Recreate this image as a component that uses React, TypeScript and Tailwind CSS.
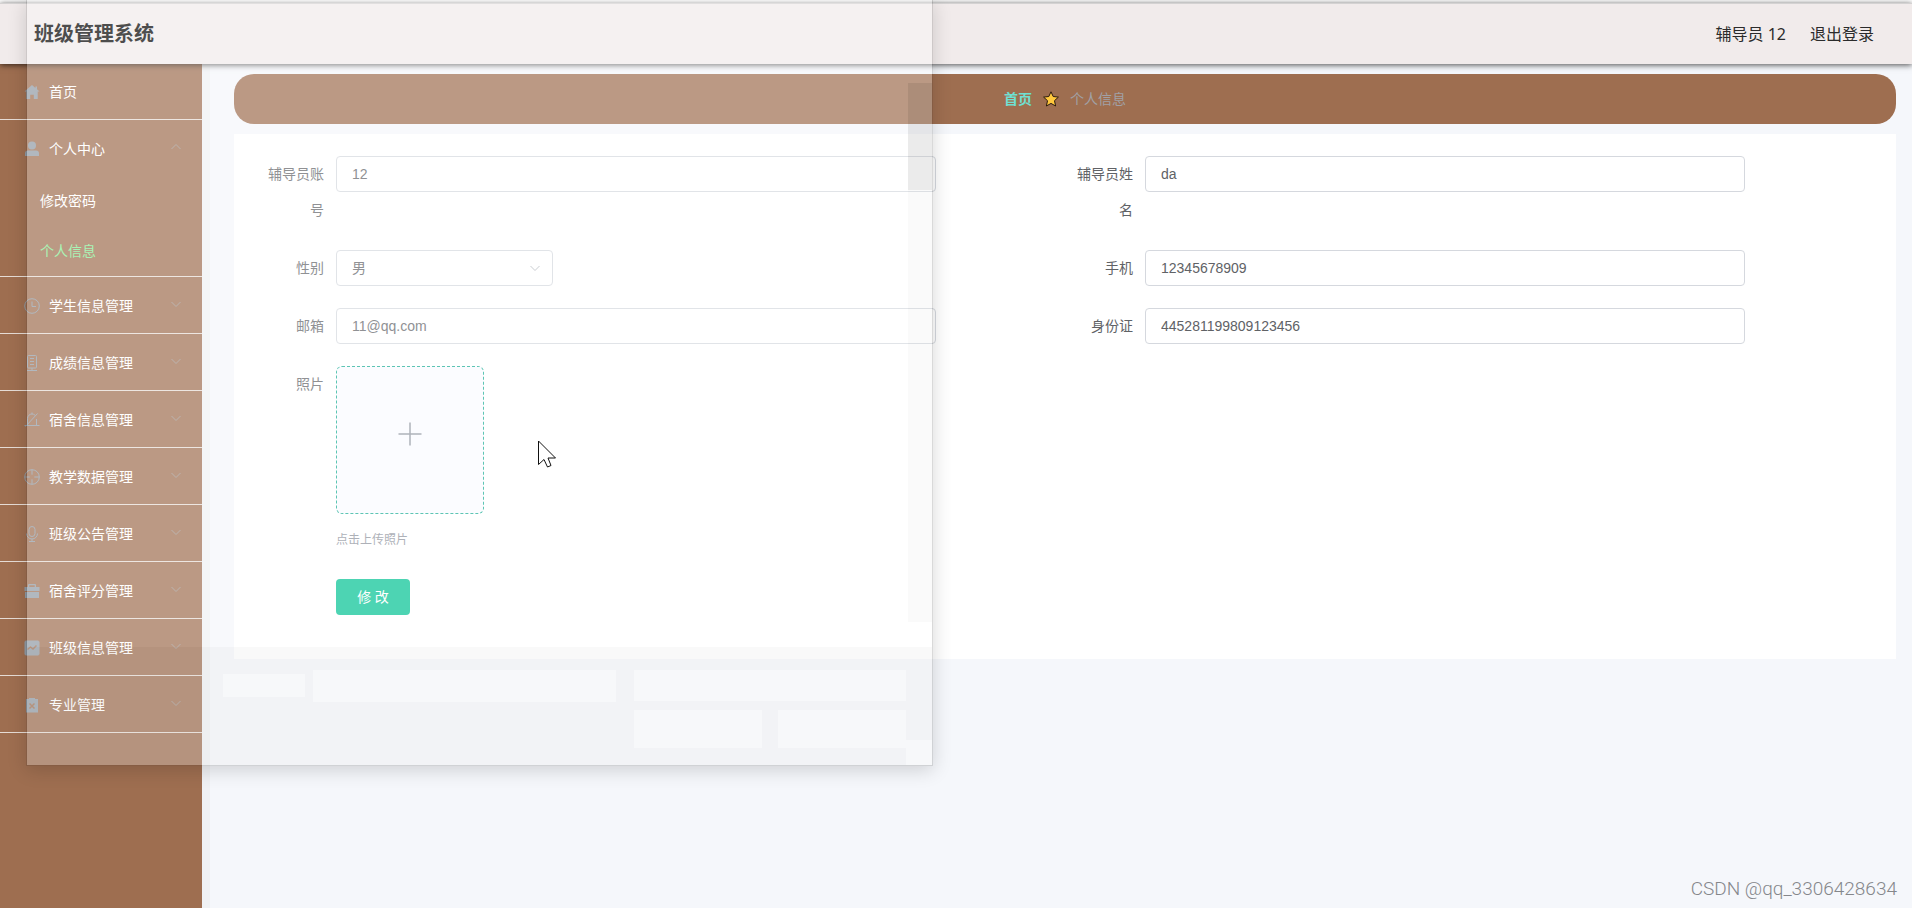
import { useState, ChangeEvent, FormEvent, ReactNode } from "react";

const menus = [
  { title: "学生信息管理", icon: "time" },
  { title: "成绩信息管理", icon: "phone" },
  { title: "宿舍信息管理", icon: "bellOff" },
  { title: "教学数据管理", icon: "aim" },
  { title: "班级公告管理", icon: "mic" },
  { title: "宿舍评分管理", icon: "case" },
  { title: "班级信息管理", icon: "chart" },
  { title: "专业管理", icon: "release" },
];

const icons: Record<string, ReactNode> = {
  home: (
    <path
      fill="currentColor"
      d="M9 2 1.5 8.600h1.800V16h3.900v-4.300h3.600V16h3.900V8.600h1.800L14 6.300V3.600h-1.600v1.300z"
    />
  ),
  user: (
    <g fill="currentColor">
      <circle cx="9" cy="5.500" r="4" />
      <path d="M2 16v-2.500A3 3 0 0 1 5 10.500h8a3 3 0 0 1 3 3V16z" />
    </g>
  ),
  time: (
    <g>
      <circle cx="9" cy="9" r="7.300" />
      <path d="M9 4.500V9.500h4" />
    </g>
  ),
  phone: (
    <g>
      <rect x="4.500" y="1.500" width="9" height="12.500" rx="1" />
      <path d="M7 4.500h4M7 7.500h4M7 10.500h4M9 14v2.500M4 16.500h10" />
    </g>
  ),
  bellOff: (
    <path d="M4.500 14V7.500A4.500 4.500 0 0 1 9 3a4.500 4.500 0 0 1 3 1.200M13.500 8v6M1.500 14.500h15M2.500 15.500 14.500 2.500M9 1.500V3" />
  ),
  aim: (
    <g>
      <circle cx="9" cy="9" r="7.300" />
      <path d="M9 1.700v5M9 11.300v5M1.700 9h5M11.300 9h5" />
    </g>
  ),
  mic: (
    <g>
      <rect x="6" y="1.500" width="6" height="10" rx="3" />
      <path d="M3.500 8.500a5.500 5.500 0 0 0 11 0M9 14v2.500M6 16.500h6" />
    </g>
  ),
  case: (
    <g fill="currentColor" stroke="none">
      <path d="M6 2h6a1 1 0 0 1 1 1v2h3.500v4h-15V5H5V3a1 1 0 0 1 1-1zm.3 1.300V5h5.400V3.300z" />
      <path d="M2 10h14v6H2z" />
    </g>
  ),
  chart: (
    <g>
      <rect x="2" y="2" width="14" height="14" rx="1" fill="currentColor" />
      <path
        d="m4.500 10.500 3-2.500 2.500 2 3.500-3.500"
        stroke="#9e6e50"
        strokeWidth="1.500"
      />
    </g>
  ),
  release: (
    <g>
      <path
        fill="currentColor"
        stroke="none"
        d="M3 3h3V2h6v1h3v13.500H3z"
      />
      <path
        d="m6.500 7.500 5 5M11.500 7.500l-5 5"
        stroke="#9e6e50"
        strokeWidth="1.500"
      />
    </g>
  ),
};

const MenuIcon = ({ name }: { name: string }) => (
  <span className="mr-[5px] flex w-6 justify-center text-[#909aa4]">
    <svg
      width="18"
      height="18"
      viewBox="0 0 18 18"
      fill="none"
      stroke="currentColor"
      strokeWidth={name === "home" || name === "user" ? 0 : 1}
    >
      {icons[name]}
    </svg>
  </span>
);

const Chevron = ({ up, className }: { up?: boolean; className?: string }) => (
  <svg
    width="12"
    height="12"
    viewBox="0 0 12 12"
    fill="none"
    stroke="currentColor"
    className={className}
  >
    <path d={up ? "m1.500 8 4.500-4.500L10.500 8" : "M1.500 4 6 8.500 10.500 4"} />
  </svg>
);

const MenuTitle = ({
  icon,
  title,
  open,
}: {
  icon: string;
  title: string;
  open?: boolean;
}) => (
  <button
    type="button"
    className="flex h-14 w-full items-center px-5 pt-0.5 text-left text-white"
  >
    <MenuIcon name={icon} />
    <span className="flex-1">{title}</span>
    <Chevron up={open} className="mb-1 text-[#a0938b]" />
  </button>
);

const Sidebar = () => (
  <nav className="w-[202px] shrink-0 bg-[#9e6e50] text-sm text-white">
    <a
      href="#home"
      className="flex h-14 items-center border-b border-[#e6dcd5] px-5"
    >
      <MenuIcon name="home" />
      首页
    </a>
    <div className="border-b border-[#e6dcd5]">
      <MenuTitle icon="user" title="个人中心" open />
      <a href="#password" className="flex h-[50px] items-center pl-10">
        修改密码
      </a>
      <a
        href="#profile"
        className="flex h-[50px] items-center pl-10 text-[#84ef96]"
      >
        个人信息
      </a>
    </div>
    {menus.map((m) => (
      <div key={m.title} className="border-b border-[#e6dcd5]">
        <MenuTitle icon={m.icon} title={m.title} />
      </div>
    ))}
  </nav>
);

const FormItem = ({
  id,
  label,
  children,
}: {
  id: string;
  label: string;
  children: ReactNode;
}) => (
  <div className="mb-[22px] flex items-start">
    <label
      htmlFor={id}
      className="w-20 shrink-0 pr-3 text-right leading-9 text-[#606266]"
    >
      {label}
    </label>
    <div className="min-w-0 flex-1">{children}</div>
  </div>
);

const inputClass =
  "block h-9 w-full max-w-[600px] rounded border border-[#d5d8de] bg-white px-[15px] font-['Liberation_Sans','Noto_Sans_CJK_SC',sans-serif] text-sm text-[#606266] outline-none";

const ProfileForm = () => {
  const [user, setUser] = useState({
    account: "12",
    name: "da",
    sex: "男",
    phone: "12345678909",
    email: "11@qq.com",
    idCard: "445281199809123456",
  });

  function handleChange(e: ChangeEvent<HTMLInputElement | HTMLSelectElement>) {
    const { name, value } = e.target;
    setUser({ ...user, [name]: value });
  }

  const updateUser = (e: FormEvent) => {
    e.preventDefault();
    console.log(user);
  };

  return (
    <form
      onSubmit={updateUser}
      className="mt-[10px] bg-white px-[22px] pt-[22px] pb-[22px] text-sm"
    >
      <div className="grid grid-cols-2">
        <FormItem id="account" label="辅导员账号">
          <input
            id="account"
            name="account"
            className={inputClass}
            value={user.account}
            onChange={handleChange}
          />
        </FormItem>
        <FormItem id="name" label="辅导员姓名">
          <input
            id="name"
            name="name"
            className={inputClass}
            value={user.name}
            onChange={handleChange}
          />
        </FormItem>
        <FormItem id="sex" label="性别">
          <div className="relative w-[217px]">
            <select
              id="sex"
              name="sex"
              className={`${inputClass} appearance-none`}
              value={user.sex}
              onChange={handleChange}
            >
              <option value="男">男</option>
              <option value="女">女</option>
            </select>
            <Chevron className="pointer-events-none absolute top-3 right-3 text-[#b4b8c0]" />
          </div>
        </FormItem>
        <FormItem id="phone" label="手机">
          <input
            id="phone"
            name="phone"
            className={inputClass}
            value={user.phone}
            onChange={handleChange}
          />
        </FormItem>
        <FormItem id="email" label="邮箱">
          <input
            id="email"
            name="email"
            className={inputClass}
            value={user.email}
            onChange={handleChange}
          />
        </FormItem>
        <FormItem id="idCard" label="身份证">
          <input
            id="idCard"
            name="idCard"
            className={inputClass}
            value={user.idCard}
            onChange={handleChange}
          />
        </FormItem>
      </div>
      <FormItem id="photo" label="照片">
        <button
          type="button"
          id="photo"
          aria-label="点击上传照片"
          className="flex h-[148px] w-[148px] items-center justify-center rounded-md border border-dashed border-[#18ad94] bg-[#f9fbff] pb-3"
        >
          <svg
            width="24"
            height="24"
            viewBox="0 0 24 24"
            stroke="#8c939d"
            strokeWidth="1.500"
          >
            <path d="M12 0.500v23M0.500 12h23" />
          </svg>
        </button>
        <p className="mt-2 text-xs leading-[35px] text-[#8b909a]">
          点击上传照片
        </p>
      </FormItem>
      <div className="mb-[22px] pl-20">
        <button
          type="submit"
          className="h-9 w-[74px] rounded bg-[#00c292] text-white"
        >
          修 改
        </button>
      </div>
    </form>
  );
};

// translucent window dragged over the page
const GhostWindow = () => (
  <div className="pointer-events-none absolute top-0 left-[26px] flex h-[766px] w-[907px] flex-col border-x border-b border-black/15 shadow-[0_4px_18px_rgba(0,0,0,0.16)]">
    <div className="flex flex-1 justify-end bg-white/30">
      <div className="mt-[83px] mb-[25px] flex w-6 flex-col bg-black/2">
        <div className="h-[107px] bg-black/6" />
      </div>
    </div>
    <div className="flex h-[118px] items-start bg-[#ececec]/30 pl-[196px]">
      <div className="mt-[27px] h-[23px] w-[82px] bg-[#fdfeff]/45" />
      <div className="mt-[23px] ml-2 h-8 w-[303px] bg-[#fdfeff]/45" />
      <div className="mt-[23px] ml-[18px] w-[272px]">
        <div className="h-[31px] bg-[#fdfeff]/45" />
        <div className="mt-[9px] flex justify-between">
          <div className="h-[38px] w-32 bg-[#fdfeff]/45" />
          <div className="h-[38px] w-32 bg-[#fdfeff]/45" />
        </div>
      </div>
      <div className="mt-auto h-[25px] flex-1 bg-[#fdfeff]/45" />
    </div>
  </div>
);

const App = () => {
  return (
    <div className="relative flex min-h-screen flex-col overflow-hidden bg-[#f5f7fb] pt-[3px] font-['Noto_Sans','Noto_Sans_CJK_SC',sans-serif]">
      <div className="absolute inset-x-0 top-0 h-[3px] bg-white" />
      <header className="relative flex h-[61px] items-center justify-between border-t border-[#d4d2d2] bg-[#f1ebeb] pr-[38px] pl-[34px] text-[#2b2b2b] shadow-[0_1px_6px_rgba(0,0,0,0.7)]">
        <h1 className="text-xl font-bold text-black">班级管理系统</h1>
        <div className="flex gap-6">
          <span>辅导员 12</span>
          <a href="#logout">退出登录</a>
        </div>
      </header>
      <div className="flex flex-1">
        <Sidebar />
        <main className="flex-1 border-l-8 border-[#f0f1f3] pt-[10px] pr-4 pl-6">
          <div className="flex h-[50px] items-center justify-center rounded-[20px] bg-[#9e6e50] text-sm">
            <a href="#home" className="font-bold text-[#6fe0d2]">
              首页
            </a>
            <svg
              width="16"
              height="16"
              viewBox="0 0 16 16"
              className="mx-[11px]"
            >
              <path
                d="m8 .8 2.200 4.700 5.200.6-3.900 3.600 1.100 5.300L8 12.400 3.400 15l1.100-5.300L.6 6.100l5.200-.6z"
                fill="#ffc83d"
                stroke="#2a1a10"
                strokeLinejoin="round"
              />
            </svg>
            <span className="text-[#a1a1a6]">个人信息</span>
          </div>
          <ProfileForm />
        </main>
      </div>
      <GhostWindow />
      <svg
        width="18"
        height="28"
        viewBox="0 0 18 28"
        className="pointer-events-none absolute top-[440px] left-[538px]"
      >
        <path
          d="M.5 1v23.500l5.500-5L9.500 27l3.500-1.500-3-7.500h7.500z"
          fill="#fff"
          stroke="#111"
        />
      </svg>
      <div className="absolute right-[15px] bottom-[5px] font-[Roboto,sans-serif] text-[19px] font-light text-[#85878b]">
        CSDN @qq_3306428634
      </div>
    </div>
  );
};

export default App;
